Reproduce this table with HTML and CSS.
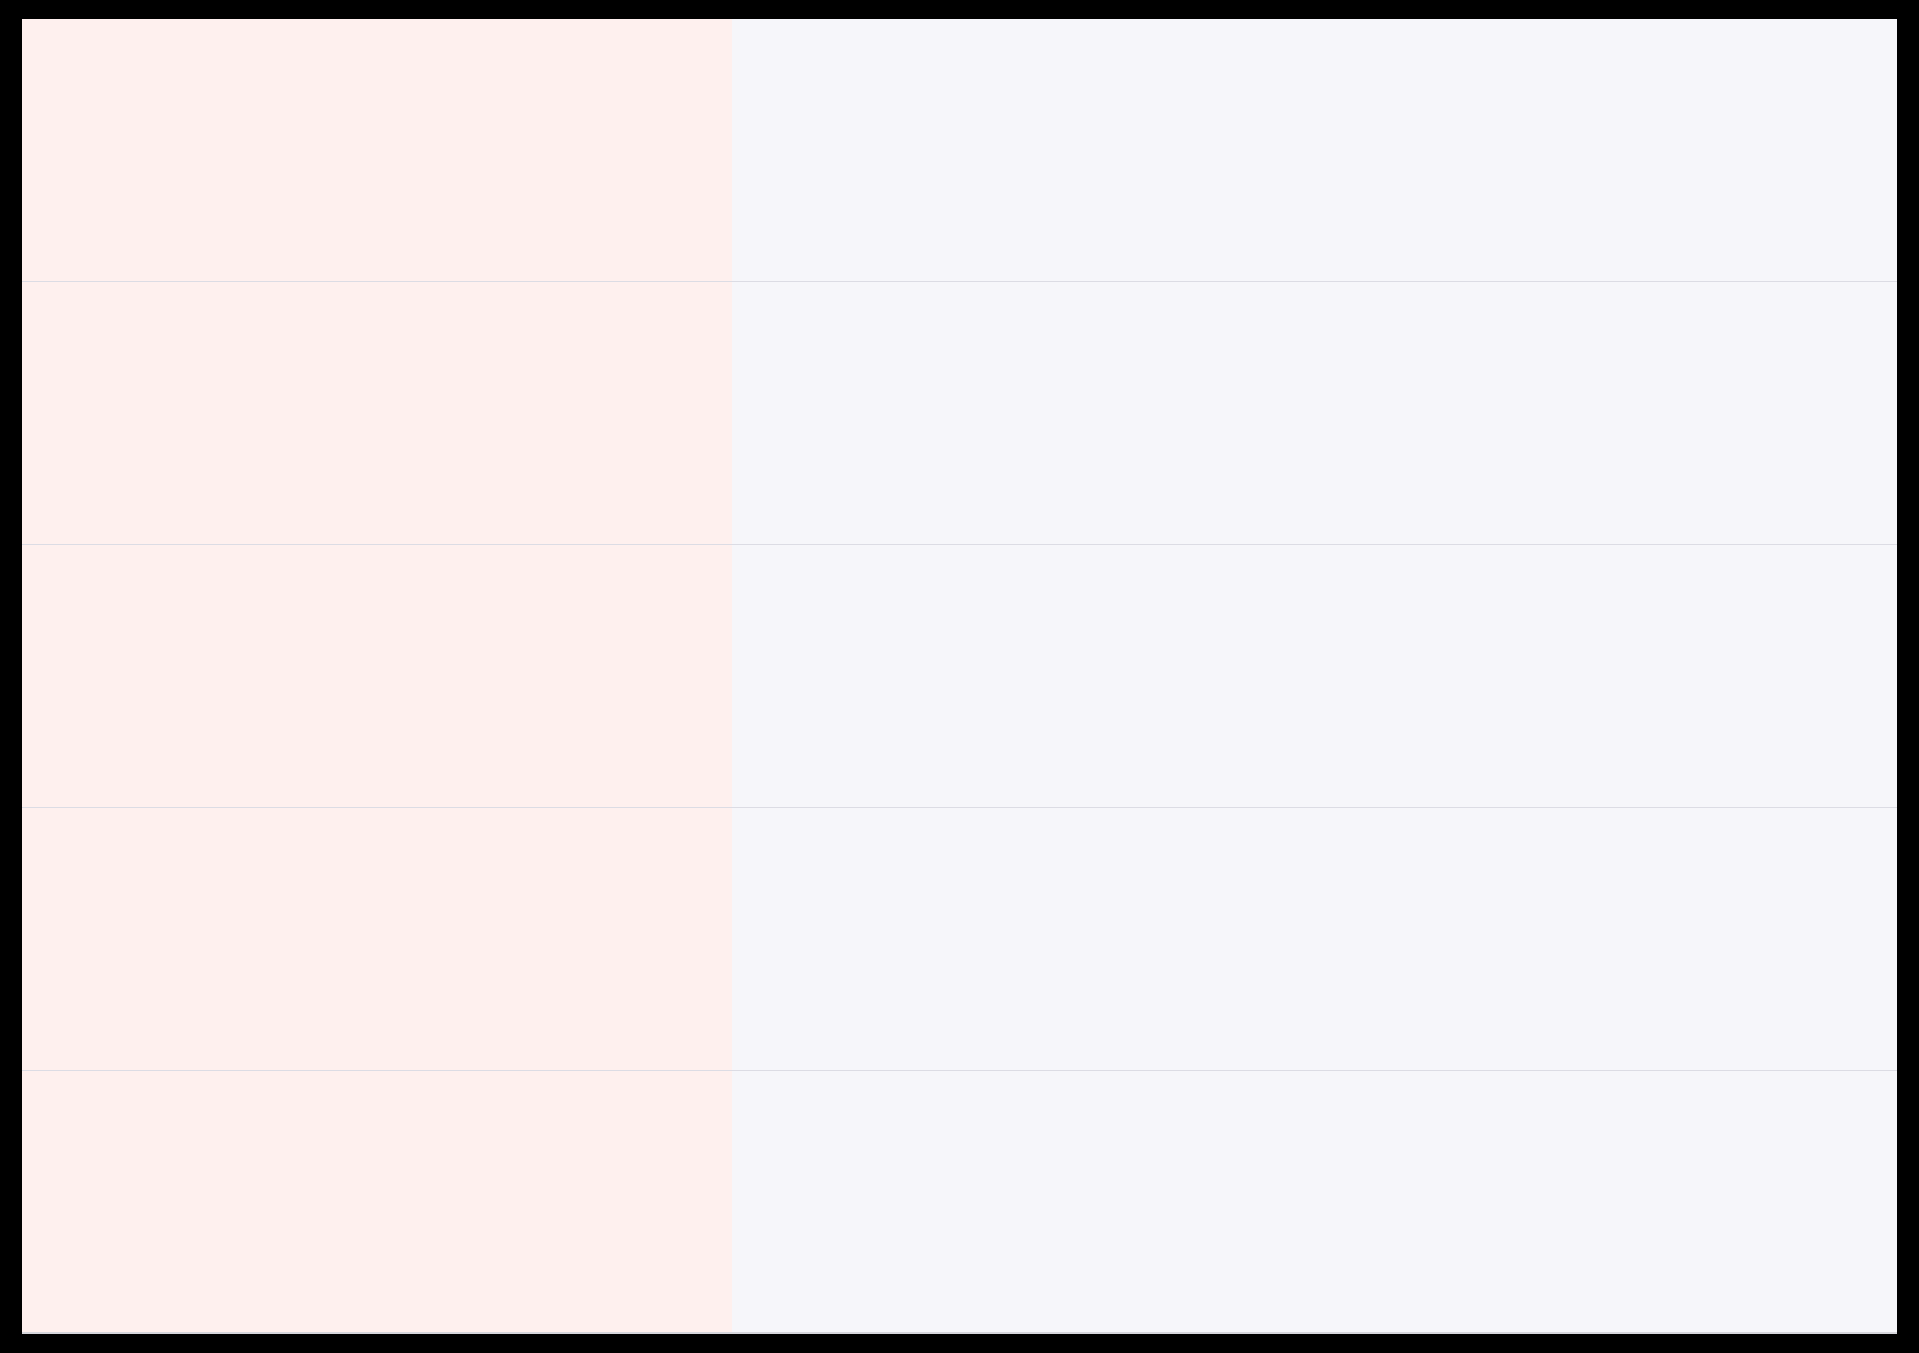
FILE: index.html
```
<!DOCTYPE html>
<html lang="en">
<head>
<meta charset="utf-8">
<title>Grid</title>
<link rel="stylesheet" href="styles.css">
</head>
<body>
<div class="board">
  <div class="row"><div class="cell left"></div><div class="cell right"></div></div>
  <div class="row"><div class="cell left"></div><div class="cell right"></div></div>
  <div class="row"><div class="cell left"></div><div class="cell right"></div></div>
  <div class="row"><div class="cell left"></div><div class="cell right"></div></div>
  <div class="row last"><div class="cell left"></div><div class="cell right"></div></div>
</div>
</body>
</html>
```
FILE: styles.css
```
html, body {
  margin: 0;
  padding: 0;
  background: #000;
  font-family: "Liberation Sans", Arial, sans-serif;
}
body {
  padding: 19px 22px 0 22px;
  width: 1875px;
  height: 1353px;
  box-sizing: content-box;
  overflow: hidden;
}
.board {
  display: flex;
  flex-direction: column;
  width: 1875px;
}
.row {
  display: grid;
  grid-template-columns: 710px 1fr;
  height: 263px;
  border-bottom: 1px solid #dcdce4;
  box-sizing: border-box;
}
.row.last {
  border-bottom: 2px solid #d6d6dc;
  height: 263px;
}
.left {
  background: #fef0ee;
}
.right {
  background: #f6f6fa;
}
```
